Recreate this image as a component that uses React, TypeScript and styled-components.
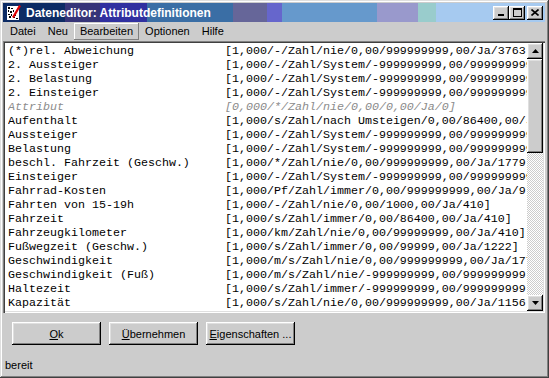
import React from 'react';
import styled, { createGlobalStyle } from 'styled-components';

const GlobalStyle = createGlobalStyle`
  html, body {
    margin: 0;
    padding: 0;
    background: #cccccc;
  }
  body {
    width: 549px;
    height: 378px;
    overflow: hidden;
    font-family: "Liberation Sans", Arial, sans-serif;
  }
`;

const raised = `
  box-shadow: inset -1px -1px 0 #000000, inset 1px 1px 0 #ffffff,
    inset -2px -2px 0 #808080, inset 2px 2px 0 #dfdfdf;
`;

const Window = styled.div`
  width: 549px;
  height: 378px;
  box-sizing: border-box;
  background: #cccccc;
  padding: 3px 4px 4px 3px;
  display: flex;
  flex-direction: column;
  box-shadow: inset -1px -1px 0 #404040, inset 1px 1px 0 #dfdfdf,
    inset -2px -2px 0 #808080, inset 2px 2px 0 #ffffff;
`;

const TitleBar = styled.div`
  height: 19px;
  display: flex;
  align-items: center;
  padding: 0 2px 0 3px;
  background: linear-gradient(
    to right,
    #0c2b64 0 62px,
    #363478 62px 97px,
    #3030a0 97px 144px,
    #3a6ea5 144px 230px,
    #666699 230px 264px,
    #6666cc 264px 279px,
    #6699cc 279px 374px,
    #9999cc 374px 415px,
    #99cccc 415px 433px,
    #a6caf0 433px
  );
`;

const TitleText = styled.span`
  color: #ffffff;
  font-weight: bold;
  font-size: 12px;
  margin-left: 4px;
  flex: 1;
  white-space: nowrap;
`;

const TitleButtons = styled.div`
  display: flex;
  gap: 0;
`;

const TitleButton = styled.div<{ $gap?: boolean }>`
  width: 16px;
  height: 14px;
  margin-left: ${(p) => (p.$gap ? '2px' : '0')};
  background: #cccccc;
  display: flex;
  align-items: center;
  justify-content: center;
  ${raised}
`;

const MenuBar = styled.div`
  height: 19px;
  display: flex;
  align-items: center;
  padding-left: 1px;
`;

const MenuItem = styled.div<{ $active?: boolean }>`
  font-size: 11px;
  color: #000000;
  height: 17px;
  line-height: 17px;
  padding: 0 6px;
  box-shadow: ${(p) =>
    p.$active ? 'inset -1px -1px 0 #808080, inset 1px 1px 0 #ffffff' : 'none'};
`;

const ListBox = styled.div`
  height: 272px;
  box-sizing: border-box;
  background: #ffffff;
  display: flex;
  box-shadow: inset 1px 1px 0 #808080, inset 2px 2px 0 #404040,
    inset -1px -1px 0 #ffffff, inset -2px -2px 0 #dfdfdf;
  padding: 2px;
`;

const Rows = styled.div`
  flex: 1;
  overflow: hidden;
  padding: 1px 0 0 3px;
  font-family: "Liberation Mono", "Courier New", monospace;
  font-size: 11.67px;
`;

const Row = styled.div<{ $muted?: boolean }>`
  height: 14px;
  line-height: 14px;
  display: flex;
  white-space: pre;
  color: ${(p) => (p.$muted ? '#8c8c8c' : '#000000')};
  font-style: ${(p) => (p.$muted ? 'italic' : 'normal')};
`;

const NameCell = styled.span`
  width: 217px;
  flex-shrink: 0;
  overflow: hidden;
`;

const ValueCell = styled.span`
  overflow: hidden;
`;

const ScrollBar = styled.div`
  width: 16px;
  display: flex;
  flex-direction: column;
  background: repeating-conic-gradient(#ffffff 0 25%, #cccccc 0 50%) 0 0 / 2px 2px;
`;

const ScrollButton = styled.div`
  height: 16px;
  background: #cccccc;
  display: flex;
  align-items: center;
  justify-content: center;
  ${raised}
`;

const Thumb = styled.div`
  height: 94px;
  background: #cccccc;
  ${raised}
`;

const Track = styled.div`
  flex: 1;
`;

const ButtonRow = styled.div`
  display: flex;
  gap: 8px;
  padding: 9px 0 0 9px;
`;

const Button = styled.div`
  width: 89px;
  height: 23px;
  background: #cccccc;
  font-size: 11px;
  color: #000000;
  display: flex;
  align-items: center;
  justify-content: center;
  ${raised}
`;

const StatusBar = styled.div`
  margin-top: auto;
  padding: 0 0 3px 2px;
  font-size: 11px;
  color: #000000;
`;

const rows: { name: string; value: string; muted?: boolean }[] = [
  { name: '(*)rel. Abweichung', value: '[1,000/-/Zahl/nie/0,00/999999999,00/Ja/3763]' },
  { name: '2. Aussteiger', value: '[1,000/-/Zahl/System/-999999999,00/999999999,00/Ja/410]' },
  { name: '2. Belastung', value: '[1,000/-/Zahl/System/-999999999,00/999999999,00/Ja/410]' },
  { name: '2. Einsteiger', value: '[1,000/-/Zahl/System/-999999999,00/999999999,00/Ja/410]' },
  { name: 'Attribut', value: '[0,000/*/Zahl/nie/0,00/0,00/Ja/0]', muted: true },
  { name: 'Aufenthalt', value: '[1,000/s/Zahl/nach Umsteigen/0,00/86400,00/Ja/410]' },
  { name: 'Aussteiger', value: '[1,000/-/Zahl/System/-999999999,00/999999999,00/Ja/410]' },
  { name: 'Belastung', value: '[1,000/-/Zahl/System/-999999999,00/999999999,00/Ja/410]' },
  { name: 'beschl. Fahrzeit (Geschw.)', value: '[1,000/*/Zahl/nie/0,00/999999999,00/Ja/1779]' },
  { name: 'Einsteiger', value: '[1,000/-/Zahl/System/-999999999,00/999999999,00/Ja/410]' },
  { name: 'Fahrrad-Kosten', value: '[1,000/Pf/Zahl/immer/0,00/999999999,00/Ja/9]' },
  { name: 'Fahrten von 15-19h', value: '[1,000/-/Zahl/nie/0,00/1000,00/Ja/410]' },
  { name: 'Fahrzeit', value: '[1,000/s/Zahl/immer/0,00/86400,00/Ja/410]' },
  { name: 'Fahrzeugkilometer', value: '[1,000/km/Zahl/nie/0,00/99999999,00/Ja/410]' },
  { name: 'Fußwegzeit (Geschw.)', value: '[1,000/s/Zahl/immer/0,00/99999,00/Ja/1222]' },
  { name: 'Geschwindigkeit', value: '[1,000/m/s/Zahl/nie/0,00/999999999,00/Ja/1779]' },
  { name: 'Geschwindigkeit (Fuß)', value: '[1,000/m/s/Zahl/nie/-999999999,00/999999999,00/Ja/410]' },
  { name: 'Haltezeit', value: '[1,000/s/Zahl/immer/-999999999,00/999999999,00/Ja/410]' },
  { name: 'Kapazität', value: '[1,000/s/Zahl/nie/0,00/999999999,00/Ja/1156]' },
];

const AppIcon = () => (
  <svg width="16" height="16" viewBox="0 0 16 16">
    <rect x="1" y="1" width="12" height="14" fill="#ffffff" />
    <rect x="2" y="2" width="2" height="2" fill="#000" />
    <rect x="5" y="3" width="2" height="1" fill="#000" />
    <rect x="2" y="5" width="1" height="2" fill="#000" />
    <rect x="4" y="6" width="2" height="2" fill="#000" />
    <rect x="7" y="5" width="1" height="2" fill="#000" />
    <rect x="2" y="9" width="2" height="1" fill="#000" />
    <rect x="5" y="9" width="1" height="2" fill="#000" />
    <rect x="3" y="11" width="2" height="2" fill="#000" />
    <rect x="7" y="12" width="2" height="1" fill="#000" />
    <rect x="9" y="9" width="1" height="2" fill="#000" />
    <rect x="10" y="13" width="2" height="1" fill="#000" />
    <polygon points="13,0 15,1 8,13 6,12" fill="#e00000" />
  </svg>
);

const UpArrow = () => (
  <svg width="7" height="4" viewBox="0 0 7 4">
    <polygon points="3.5,0 7,4 0,4" fill="#000" />
  </svg>
);

const DownArrow = () => (
  <svg width="7" height="4" viewBox="0 0 7 4">
    <polygon points="0,0 7,0 3.5,4" fill="#000" />
  </svg>
);

export default function App() {
  return (
    <>
      <GlobalStyle />
      <Window>
        <TitleBar>
          <AppIcon />
          <TitleText>Dateneditor: Attributdefinitionen</TitleText>
          <TitleButtons>
            <TitleButton>
              <svg width="8" height="7" viewBox="0 0 8 7">
                <rect x="1" y="5" width="6" height="2" fill="#000" />
              </svg>
            </TitleButton>
            <TitleButton>
              <svg width="9" height="9" viewBox="0 0 9 9">
                <rect x="0.5" y="0.5" width="8" height="8" fill="none" stroke="#000" />
                <rect x="0" y="0" width="9" height="2" fill="#000" />
              </svg>
            </TitleButton>
            <TitleButton $gap>
              <svg width="8" height="7" viewBox="0 0 8 7">
                <path d="M0.5 0.5 L7.5 6.5 M7.5 0.5 L0.5 6.5" stroke="#000" strokeWidth="1.6" />
              </svg>
            </TitleButton>
          </TitleButtons>
        </TitleBar>
        <MenuBar>
          <MenuItem>Datei</MenuItem>
          <MenuItem>Neu</MenuItem>
          <MenuItem $active>Bearbeiten</MenuItem>
          <MenuItem>Optionen</MenuItem>
          <MenuItem>Hilfe</MenuItem>
        </MenuBar>
        <ListBox>
          <Rows>
            {rows.map((r) => (
              <Row key={r.name} $muted={r.muted}>
                <NameCell>{r.name}</NameCell>
                <ValueCell>{r.value}</ValueCell>
              </Row>
            ))}
          </Rows>
          <ScrollBar>
            <ScrollButton>
              <UpArrow />
            </ScrollButton>
            <Thumb />
            <Track />
            <ScrollButton>
              <DownArrow />
            </ScrollButton>
          </ScrollBar>
        </ListBox>
        <ButtonRow>
          <Button>
            <u>O</u>k
          </Button>
          <Button>
            <u>Ü</u>bernehmen
          </Button>
          <Button>
            <u>E</u>igenschaften ...
          </Button>
        </ButtonRow>
        <StatusBar>bereit</StatusBar>
      </Window>
    </>
  );
}
